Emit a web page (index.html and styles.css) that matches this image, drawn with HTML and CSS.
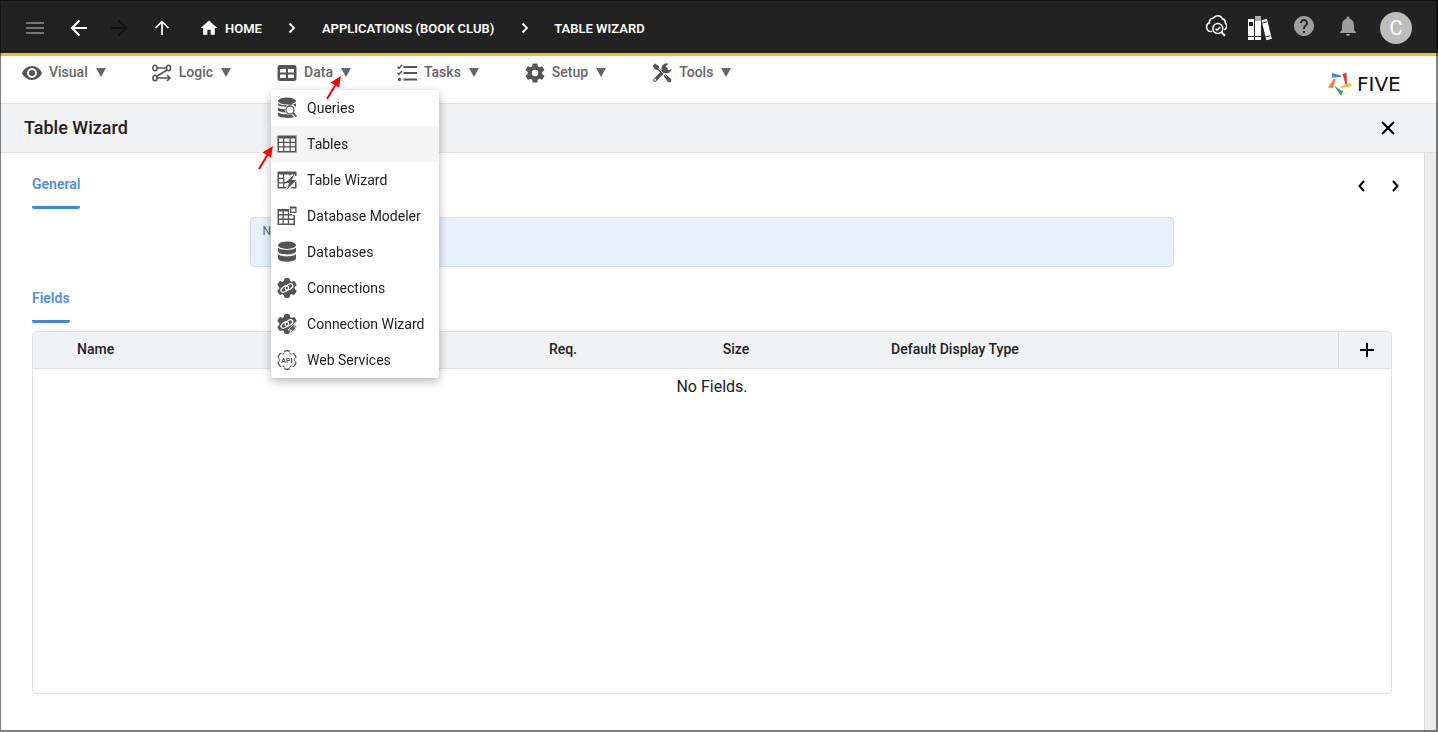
FILE: index.html
```html
<!DOCTYPE html>
<html lang="en">
<head>
    <meta charset="utf-8">
    <title>Table Wizard</title>
    <link rel="stylesheet" href="styles.css">
</head>
<body>
    <svg class="defs" aria-hidden="true">
        <symbol id="cog" viewBox="0 0 20 20">
            <circle cx="10" cy="10" r="7.800" />
            <rect x="7" y="0" width="6" height="20" rx="2" />
            <rect x="7" y="0" width="6" height="20" rx="2" transform="rotate(60 10 10)" />
            <rect x="7" y="0" width="6" height="20" rx="2" transform="rotate(120 10 10)" />
        </symbol>
        <symbol id="link" viewBox="0 0 20 20">
            <g fill="none" stroke="#fff" stroke-width="1.300">
                <ellipse cx="7.800" cy="11" rx="4.200" ry="2.500" transform="rotate(-35 7.800 11)" />
                <ellipse cx="12" cy="9" rx="4.200" ry="2.500" transform="rotate(-35 12 9)" />
            </g>
        </symbol>
    </svg>

    <header class="topbar">
        <button class="icon-btn menu-btn" aria-label="Menu"><svg width="18" height="12" viewBox="0 0 18 12"><path d="M0 1h18M0 6h18M0 11h18" stroke="currentColor" stroke-width="2" /></svg></button>
        <button class="icon-btn" aria-label="Back"><svg width="18" height="18" viewBox="0 0 18 18"><path d="M17 9H2.500M9.500 1.500L2 9l7.500 7.500" fill="none" stroke="currentColor" stroke-width="2" /></svg></button>
        <button class="icon-btn forward-btn" aria-label="Forward" disabled><svg width="18" height="18" viewBox="0 0 18 18"><path d="M1 9h15M9 1.500L16.500 9 9 16.500" fill="none" stroke="currentColor" stroke-width="2" /></svg></button>
        <button class="icon-btn" aria-label="Up"><svg width="18" height="18" viewBox="0 0 18 18"><path d="M9 16V3M2.500 9L9 2.700 15.500 9" fill="none" stroke="currentColor" stroke-width="1.700" /></svg></button>
        <nav class="crumbs" aria-label="Breadcrumb">
            <a href="#" class="home"><svg width="20" height="20" viewBox="0 0 24 24"><path d="M10 20v-6h4v6h5v-8h3L12 3 2 12h3v8z" fill="currentColor" /></svg>HOME</a>
            <svg width="8" height="12" viewBox="0 0 8 12"><path d="M1.500 1.500L6 6l-4.500 4.500" fill="none" stroke="currentColor" stroke-width="1.800" /></svg>
            <a href="#">APPLICATIONS (BOOK CLUB)</a>
            <svg width="8" height="12" viewBox="0 0 8 12"><path d="M2.500 1.500L7 6l-4.500 4.500" fill="none" stroke="currentColor" stroke-width="1.800" /></svg>
            <a href="#">TABLE WIZARD</a>
        </nav>
        <div class="top-actions">
            <button class="icon-btn raised" aria-label="Inspect"><svg width="22" height="24" viewBox="0 1 22 24" fill="none" stroke="currentColor" stroke-width="1.500"><path d="M7 18.500H6a4.500 4.500 0 0 1-1.500-8.700A4 4 0 0 1 8.500 5a5 5 0 0 1 8.800.8 4 4 0 0 1 3 4.200 4 4 0 0 1 .4 5.500c-.5.8-1 1.200-1.600 1.400" /><circle cx="12.800" cy="15.500" r="5" /><path d="M10.500 15.500l1.700 1.700 3-3.200" /><path d="M16.500 19.200l3.500 3.600" stroke-width="2" /></svg></button>
            <button class="icon-btn" aria-label="Library"><svg width="25" height="26" viewBox="0 0 25 26"><path d="M1 4h6v21H1zM8 1h6v24H8z" fill="#fff" /><path d="M14.500 5.300l5.400-1.500 4.900 20-5.400 1.500z" fill="#fff" /><path d="M8 1h6v5H8z" fill="#aaa" /><path d="M2 7h4v4H2zM1 21h6v1H1zM8 21h6v1H8z" fill="#222" /><path d="M15.500 8l4.500-1.200M18.500 22l4.800-1.200" stroke="#222" /></svg></button>
            <button class="icon-btn raised dim" aria-label="Help"><svg width="24" height="24" viewBox="0 0 24 24"><path d="M12 2C6.480 2 2 6.480 2 12s4.480 10 10 10 10-4.480 10-10S17.520 2 12 2zm1 17h-2v-2h2v2zm2.070-7.750l-.9.920C13.450 12.900 13 13.500 13 15h-2v-.5c0-1.100.45-2.100 1.170-2.830l1.240-1.260c.37-.36.59-.86.59-1.410 0-1.100-.9-2-2-2s-2 .9-2 2H8c0-2.210 1.790-4 4-4s4 1.790 4 4c0 .88-.36 1.680-.93 2.250z" fill="currentColor" /></svg></button>
            <button class="icon-btn raised dim" aria-label="Notifications"><svg width="24" height="24" viewBox="0 0 24 24"><path d="M12 22c1.100 0 2-.9 2-2h-4c0 1.100.89 2 2 2zm6-6v-5c0-3.070-1.640-5.640-4.500-6.320V4c0-.83-.67-1.500-1.500-1.500s-1.500.67-1.500 1.500v.68C7.630 5.360 6 7.920 6 11v5l-2 2v1h16v-1l-2-2z" fill="currentColor" /></svg></button>
            <button class="avatar">C</button>
        </div>
    </header>

    <div class="menubar">
        <nav class="menus">
            <button class="menu-item"><svg width="20" height="20" viewBox="0 0 20 20"><path d="M10 3C5.500 3 1.700 6 0 10c1.700 4 5.500 7 10 7s8.300-3 10-7c-1.700-4-5.500-7-10-7zm0 12a5 5 0 1 1 0-10 5 5 0 0 1 0 10z" fill="currentColor" /><circle cx="10" cy="10" r="3" fill="currentColor" /></svg><span>Visual</span><svg class="caret" width="10" height="10" viewBox="0 0 10 10"><path d="M0 0h10L5 9z" /></svg></button>
            <button class="menu-item"><svg width="20" height="20" viewBox="0 0 20 20" fill="none" stroke="currentColor" stroke-width="1.600"><ellipse cx="3" cy="5" rx="2" ry="2.700" /><ellipse cx="16.500" cy="5" rx="2" ry="2.700" /><ellipse cx="3" cy="15" rx="2" ry="2.700" /><path d="M5 5h9.500M15 7L4.800 13.200M5 15h12.500M15 12l3 3-3 3" /></svg><span>Logic</span><svg class="caret" width="10" height="10" viewBox="0 0 10 10"><path d="M0 0h10L5 9z" /></svg></button>
            <div class="menu-open">
                <button class="menu-item" aria-expanded="true"><svg width="20" height="20" viewBox="0 0 20 20"><path fill-rule="evenodd" d="M3 2h14a2.500 2.500 0 0 1 2.500 2.500v11A2.500 2.500 0 0 1 17 18H3a2.500 2.500 0 0 1-2.500-2.500v-11A2.500 2.500 0 0 1 3 2zM3 6v3.500h6V6zm8 0v3.500h6V6zm-8 5.500V15h6v-3.500zm8 0V15h6v-3.500z" fill="currentColor" /></svg><span>Data</span><svg class="caret" width="10" height="10" viewBox="0 0 10 10"><path d="M0 0h10L5 9z" /></svg></button>
                <ul class="dropdown">
                    <li><button><svg width="20" height="22" viewBox="0 0 20 22"><ellipse cx="10" cy="4" rx="9" ry="3.500" /><path d="M1 6c2 3 16 3 18 0v5a5.500 5.500 0 0 0-10-1.200C5 9.700 2 9 1 8zM1 10.500c1.500 1 4 1.500 6.800 1.600-.2 1.200 0 2.300.5 3.300C5 15.300 2 14.500 1 13.500zM1 15.500c2 1.300 5 1.800 9 1.800 1.500.9 3.200.9 4.600.3l2.400 2.500c-4 1.500-14.500 1.200-16-1.500z" /><circle cx="13" cy="13" r="4" fill="none" stroke="currentColor" stroke-width="1.300" /><path d="M16 16l3.500 3.500" stroke="currentColor" stroke-width="1.800" /></svg>Queries</button></li>
                    <li class="active"><button><svg width="20" height="20" viewBox="0 0 20 20"><path fill-rule="evenodd" d="M.5 1.500h19v17H.5zM2 4.500v3.300h4V4.500zm5.300 0v3.300h5.200V4.500zm6.500 0v3.300H18V4.500zM2 9v3.300h4V9zm5.300 0v3.300h5.200V9zm6.500 0v3.300H18V9zM2 13.600V17h4v-3.400zm5.300 0V17h5.200v-3.400zm6.500 0V17H18v-3.400z" /></svg>Tables</button></li>
                    <li><button><svg width="20" height="20" viewBox="0 0 20 20"><path fill-rule="evenodd" d="M.5 1.500h19V6H18V4.500h-4.200L12 7.800H7.300V12h2.200v1.600H7.300V17h2.200v1.500h-9zM2 4.500v3.300h4V4.500zm5.300 0v3.300h5.200V4.500zM2 9v3.300h4V9zm0 4.600V17h4v-3.400z" /><path d="M17.500 4l-9.500 9h4.300l-2.800 7 10-10h-4.700zM18 12h1.500v6.500h-5V17H18z" /></svg>Table Wizard</button></li>
                    <li><button><svg width="20" height="20" viewBox="0 0 20 20"><path fill-rule="evenodd" d="M.5 3H12v4.300h3.200V9H18v10H.5zM2 5.500v2.600h3.500V5.500zm4.800 0v2.600h4V5.500zM2 9.400v3.200h3.500V9.400zm4.800 0v3.200h4V9.400zm5.300 0v3.200h4.400V9.400zM2 14v3.500h3.500V14zm4.800 0v3.500h4V14zm5.300 0v3.500h4.400V14z" /><path d="M12 0h8v8h-8z" fill="#fff" /><path fill-rule="evenodd" d="M13 .5h6.500V7H13zm1.300 2v3.200h4V2.500z" /></svg>Database Modeler</button></li>
                    <li><button><svg width="20" height="22" viewBox="0 0 20 22"><ellipse cx="10" cy="4.200" rx="9" ry="3.700" /><path d="M1 6.500c2 3.200 16 3.200 18 0v4.300c-1.500 3.500-16.500 3.500-18 0zM1 13c2 3.200 16 3.200 18 0v4.700c-1.500 4-16.500 4-18 0z" /></svg>Databases</button></li>
                    <li><button><svg width="20" height="20" viewBox="0 0 20 20"><use href="#cog" /><use href="#link" /></svg>Connections</button></li>
                    <li><button><svg width="20" height="20" viewBox="0 0 20 20"><use href="#cog" /><use href="#link" /><path d="M18.500 8.500L11 16h3.500L12 20.500l8-7.500h-3z" stroke="#fff" stroke-width=".7" /></svg>Connection Wizard</button></li>
                    <li><button><svg width="20" height="20" viewBox="0 0 20 20"><use href="#cog" /><g fill="#fff" transform="translate(1.300 1.300) scale(.87)"><use href="#cog" width="20" height="20" /></g><text x="10" y="12.500" text-anchor="middle" class="api-text">API</text></svg>Web Services</button></li>
                </ul>
                <svg class="pointer pointer-menu" width="18" height="26" viewBox="0 0 18 26"><path d="M2 24L11 9" stroke="red" stroke-width="2" /><path d="M16 1L5.500 7.500l8.500 5z" fill="red" /></svg>
                <svg class="pointer pointer-item" width="18" height="26" viewBox="0 0 18 26"><path d="M2 24L11 9" stroke="red" stroke-width="2" /><path d="M16 1L5.500 7.500l8.500 5z" fill="red" /></svg>
            </div>
            <button class="menu-item"><svg width="20" height="20" viewBox="0 0 20 20"><path d="M6.500 4H20M6.500 10H20M6.500 16.500H20" stroke="currentColor" stroke-width="2" /><path d="M.5 3.800L2 5.300 5 2M.5 9.800L2 11.300 5 8" fill="none" stroke="currentColor" stroke-width="1.500" /><circle cx="2.500" cy="16.500" r="1.700" fill="currentColor" /></svg><span>Tasks</span><svg class="caret" width="10" height="10" viewBox="0 0 10 10"><path d="M0 0h10L5 9z" /></svg></button>
            <button class="menu-item"><svg width="20" height="20" viewBox="2 2 20 20"><path d="M19.140 12.940c.04-.3.06-.61.06-.94 0-.32-.02-.64-.07-.94l2.030-1.580c.18-.14.23-.41.12-.61l-1.920-3.320c-.12-.22-.37-.29-.59-.22l-2.390.96c-.5-.38-1.030-.7-1.620-.94l-.36-2.540c-.04-.24-.24-.41-.48-.41h-3.840c-.24 0-.43.17-.47.41l-.36 2.540c-.59.24-1.130.57-1.620.94l-2.390-.96c-.22-.08-.47 0-.59.22L2.740 8.870c-.12.21-.08.47.12.61l2.030 1.580c-.05.3-.09.63-.09.94s.02.64.07.94l-2.030 1.580c-.18.14-.23.41-.12.61l1.920 3.320c.12.22.37.29.59.22l2.390-.96c.5.38 1.030.7 1.620.94l.36 2.540c.05.24.24.41.48.41h3.840c.24 0 .44-.17.47-.41l.36-2.540c.59-.24 1.130-.56 1.620-.94l2.390.96c.22.08.47 0 .59-.22l1.920-3.320c.12-.22.07-.47-.12-.61l-2.010-1.580zM12 15.200a3.200 3.200 0 1 1 0-6.400 3.200 3.200 0 0 1 0 6.400z" fill="currentColor" /></svg><span>Setup</span><svg class="caret" width="10" height="10" viewBox="0 0 10 10"><path d="M0 0h10L5 9z" /></svg></button>
            <button class="menu-item"><svg width="20" height="20" viewBox="0 0 20 20"><path d="M.5 3L3 .5l4 2.700.3 2.300 4 4-1.500 1.500-4-4L3.500 6.700zM11.500 13l2-2 5.500 5a2.200 2.200 0 0 1-3 3z" fill="currentColor" /><path d="M3 17L14 6" stroke="currentColor" stroke-width="3.600" stroke-linecap="round" /><path d="M16.500.8a5 5 0 1 0 2.900 5.200l-2.800 1.200-2.600-1-.5-2.700z" fill="currentColor" /><path d="M6.500 5.500l8 8" stroke="#fff" stroke-width=".8" /><circle cx="3.200" cy="16.800" r="1" fill="#fff" /></svg><span>Tools</span><svg class="caret" width="10" height="10" viewBox="0 0 10 10"><path d="M0 0h10L5 9z" /></svg></button>
        </nav>
        <div class="brand">
            <svg width="24" height="24" viewBox="0 0 24 24"><path d="M4 1l9 2.500V5L4 5.500z" fill="#3f86dc" /><path d="M14.500 2l4-1.500L19 12l-1.500.5z" fill="#e5343d" /><path d="M12.500 14.500L22 11l2 3-11 2z" fill="#fbb829" /><path d="M6 13.500l9 6-2 4.500z" fill="#3ba757" /><path d="M6 6.500l1.500.5L5 16l-5-.5z" fill="#fa7d2c" /></svg>
            <span>FIVE</span>
        </div>
    </div>

    <div class="titlebar">
        <h1>Table Wizard</h1>
        <button class="icon-btn" aria-label="Close"><svg width="14" height="14" viewBox="0 0 14 14"><path d="M1 1l12 12M13 1L1 13" stroke="#000" stroke-width="2" /></svg></button>
    </div>

    <main class="page">
        <div class="section-head">
            <h2>General</h2>
            <div class="pager">
                <button class="icon-btn" aria-label="Previous"><svg width="8" height="12" viewBox="0 0 8 12"><path d="M6 1L1.500 6 6 11" fill="none" stroke="#000" stroke-width="2" /></svg></button>
                <button class="icon-btn" aria-label="Next"><svg width="8" height="12" viewBox="0 0 8 12"><path d="M1 1l4.500 5L1 11" fill="none" stroke="#000" stroke-width="2" /></svg></button>
            </div>
        </div>
        <div class="field">
            <label for="name">Name</label>
            <input id="name" type="text">
        </div>
        <div class="section-head">
            <h2>Fields</h2>
        </div>
        <div class="grid-box">
            <table class="fields">
                <thead>
                    <tr>
                        <th class="col-name">Name</th>
                        <th class="col-req">Req.</th>
                        <th class="col-size">Size</th>
                        <th>Default Display Type</th>
                        <th class="col-add"><button class="icon-btn" aria-label="Add field"><svg width="14" height="14" viewBox="0 0 14 14"><path d="M7 0v14M0 7h14" stroke="#000" stroke-width="2" /></svg></button></th>
                    </tr>
                </thead>
                <tbody>
                    <tr>
                        <td colspan="5">No Fields.</td>
                    </tr>
                </tbody>
            </table>
        </div>
    </main>
</body>
</html>
```
FILE: styles.css
```css
* {
    box-sizing: border-box;
}

body {
    margin: 0;
    min-height: 100vh;
    display: flex;
    flex-direction: column;
    font-family: Roboto, "Liberation Sans", sans-serif;
    font-size: 14px;
    color: #212121;
    background: #fff;
}

/* window frame */
body::after {
    content: "";
    position: fixed;
    inset: 0;
    border: solid rgba(0, 0, 0, .5);
    border-width: 1px 2px 2px 1px;
    pointer-events: none;
}

button {
    font: inherit;
    color: inherit;
    border: 0;
    padding: 0;
    background: none;
    cursor: pointer;
}

.defs {
    display: none;
}

.icon-btn {
    display: flex;
    align-items: center;
    justify-content: center;
    flex: none;
}

.topbar {
    display: flex;
    align-items: center;
    height: 56px;
    padding: 3px 26px 0;
    border-bottom: 3px solid #fbb829;
    background: #222;
    color: #fff;
}

.menu-btn {
    color: #757575;
    margin-right: 26px;
}

.forward-btn {
    color: #111;
    margin: 0 25px 0 22px;
}

.crumbs {
    display: flex;
    align-items: center;
    gap: 26px;
    margin-left: 28px;
    font-size: 13px;
    font-weight: 600;
}

.crumbs a {
    color: #fff;
    text-decoration: none;
    white-space: nowrap;
}

.crumbs .home {
    display: flex;
    align-items: center;
    gap: 6px;
}

.top-actions {
    display: flex;
    align-items: center;
    gap: 20px;
    margin-left: auto;
}

.raised {
    padding-bottom: 4px;
}

.dim {
    color: #9e9e9e;
}

.avatar {
    width: 32px;
    height: 32px;
    border-radius: 50%;
    background: #bdbdbd;
    color: #fff;
    font-size: 20px;
}

.menubar {
    display: flex;
    justify-content: space-between;
    height: 48px;
    padding: 6px 22px 0;
    border-bottom: 1px solid #e0e0e0;
    color: #555;
}

.menus {
    display: flex;
    align-items: flex-start;
    gap: 46px;
}

.menu-item {
    display: flex;
    align-items: center;
    gap: 7px;
    height: 22px;
    font-weight: 500;
    color: #666;
}

.menu-item span {
    padding-bottom: 2px;
}

.menu-item svg {
    color: #555;
}

.menu-item .caret {
    fill: #666;
    margin-left: 1px;
}

.menu-open {
    position: relative;
}

.dropdown {
    position: absolute;
    z-index: 2;
    top: 28px;
    left: -6px;
    width: 168px;
    margin: 0;
    padding: 0;
    list-style: none;
    border-radius: 3px;
    background: #fff;
    box-shadow: 0 3px 10px rgba(0, 0, 0, .3);
}

.dropdown button {
    display: flex;
    align-items: center;
    gap: 10px;
    width: 100%;
    height: 36px;
    padding: 0 6px;
    color: #212121;
    white-space: nowrap;
}

.dropdown svg {
    color: #555;
    fill: #555;
}

.dropdown .active {
    background: #f4f4f4;
}

.api-text {
    font-size: 7px;
    font-weight: 700;
}

.pointer {
    position: absolute;
    z-index: 3;
}

.pointer-menu {
    top: 13px;
    left: 48px;
}

.pointer-item {
    top: 83px;
    left: -20px;
}

.brand {
    display: flex;
    align-items: center;
    gap: 5px;
    width: 88px;
    padding-top: 2px;
    font-family: "DejaVu Sans", sans-serif;
    font-size: 20px;
    color: #111;
}

.titlebar {
    display: flex;
    align-items: center;
    justify-content: space-between;
    height: 49px;
    padding: 0 43px 0 24px;
    border-bottom: 1px solid #e0e0e0;
    background: #f1f2f4;
}

.titlebar h1 {
    margin: 0;
    padding-bottom: 2px;
    font-size: 18px;
    font-weight: 500;
}

.page {
    flex: 1;
    display: flex;
    flex-direction: column;
    margin-right: 13px;
    padding: 16px 32px 38px;
    border-right: 1px solid #d8d8d8;
    box-shadow: 13px 0 #ebebeb;
}

.section-head {
    display: flex;
    align-items: flex-start;
    justify-content: space-between;
}

.section-head h2 {
    margin: 0;
    height: 40px;
    border-bottom: 3px solid #4287db;
    border-radius: 2px;
    font-size: 14px;
    font-weight: 600;
    line-height: 30px;
    color: #4f8fdc;
}

.pager {
    display: flex;
    gap: 26px;
    margin-right: -8px;
    padding-top: 11px;
}

.field {
    display: flex;
    flex-direction: column;
    width: 68%;
    height: 50px;
    margin: 8px auto 16px;
    padding: 6px 12px;
    border: 1px solid #cfdff0;
    border-radius: 4px;
    background: #e6f1fc;
}

.field label {
    font-size: 12px;
    color: #666;
}

.field input {
    width: 100%;
    border: 0;
    outline: 0;
    padding: 0;
    background: none;
    font: inherit;
}

.grid-box {
    flex: 1;
    margin-top: 8px;
    border: 1px solid #e0e0e0;
    border-radius: 4px;
    overflow: hidden;
}

.fields {
    width: 100%;
    table-layout: fixed;
    border-collapse: collapse;
}

.fields th {
    height: 36px;
    padding: 0 8px 2px;
    border-bottom: 1px solid #e0e0e0;
    background: #f1f2f4;
    font-weight: 500;
    text-align: left;
}

.fields .col-name {
    width: 37.4%;
    padding-left: 44px;
}

.col-req {
    width: 12.8%;
}

.col-size {
    width: 12.4%;
}

.fields .col-add {
    width: 53px;
    padding: 0 4px 0 8px;
    border-left: 1px solid #d8d8d8;
}

.col-add .icon-btn {
    width: 100%;
}

.fields td {
    height: 36px;
    padding: 0;
    font-size: 16px;
    text-align: center;
}
```
